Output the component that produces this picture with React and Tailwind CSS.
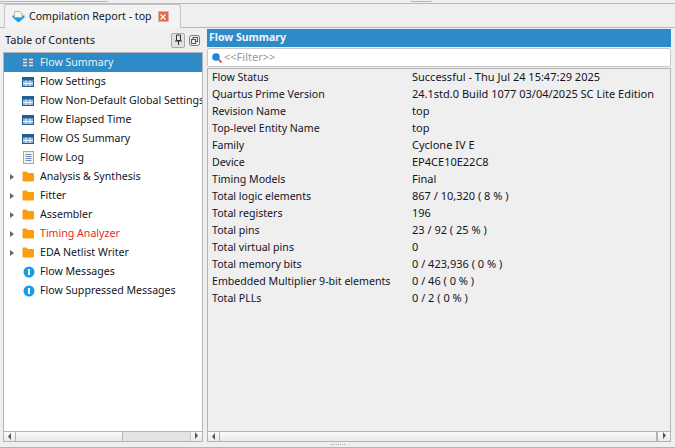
const tree = [
  { label: "Flow Summary", icon: "grid", selected: true },
  { label: "Flow Settings", icon: "table" },
  { label: "Flow Non-Default Global Settings", icon: "table" },
  { label: "Flow Elapsed Time", icon: "table" },
  { label: "Flow OS Summary", icon: "table" },
  { label: "Flow Log", icon: "log" },
  { label: "Analysis & Synthesis", icon: "folder", arrow: true },
  { label: "Fitter", icon: "folder", arrow: true },
  { label: "Assembler", icon: "folder", arrow: true },
  { label: "Timing Analyzer", icon: "folder", arrow: true, red: true },
  { label: "EDA Netlist Writer", icon: "folder", arrow: true },
  { label: "Flow Messages", icon: "info" },
  { label: "Flow Suppressed Messages", icon: "info" },
];

const rows = [
  ["Flow Status", "Successful - Thu Jul 24 15:47:29 2025"],
  ["Quartus Prime Version", "24.1std.0 Build 1077 03/04/2025 SC Lite Edition"],
  ["Revision Name", "top"],
  ["Top-level Entity Name", "top"],
  ["Family", "Cyclone IV E"],
  ["Device", "EP4CE10E22C8"],
  ["Timing Models", "Final"],
  ["Total logic elements", "867 / 10,320 ( 8 % )"],
  ["Total registers", "196"],
  ["Total pins", "23 / 92 ( 25 % )"],
  ["Total virtual pins", "0"],
  ["Total memory bits", "0 / 423,936 ( 0 % )"],
  ["Embedded Multiplier 9-bit elements", "0 / 46 ( 0 % )"],
  ["Total PLLs", "0 / 2 ( 0 % )"],
];

const TreeIcon = ({ type, selected }) => {
  if (type === "folder") {
    return (
      <svg width="12" height="11" viewBox="0 0 12 11">
        <path d="M0.5 1.5 a1 1 0 0 1 1-1 h3 l1.5 1.5 h5 a1 1 0 0 1 1 1 v6.5 a1 1 0 0 1-1 1 h-9.5 a1 1 0 0 1-1-1z" fill="#fb9d0f" />
      </svg>
    );
  }
  if (type === "info") {
    return (
      <svg className="ml-px" width="12" height="12" viewBox="0 0 12 12">
        <circle cx="6" cy="6" r="5.5" fill="#1b9ae8" />
        <rect x="5" y="3" width="2" height="6" fill="#fff" />
      </svg>
    );
  }
  if (type === "log") {
    return (
      <svg className="ml-px" width="11" height="13" viewBox="0 0 11 13">
        <rect x="0.5" y="0.5" width="10" height="12" fill="#f4f1ea" stroke="#b3a794" />
        <path d="M2.5 3.5h6M2.5 5.5h6M2.5 7.5h6M2.5 9.5h6" stroke="#6f8fb5" />
      </svg>
    );
  }
  if (type === "grid") {
    return (
      <svg width="12" height="11" viewBox="0 0 12 11">
        <rect width="12" height="11" fill={selected ? "#4a83ad" : "#2d6da8"} />
        <path d="M1 2.5h4M7 2.5h4M1 5.5h4M7 5.5h4M1 8.5h4M7 8.5h4" stroke="#d8e6f2" strokeWidth="1.4" />
      </svg>
    );
  }
  return (
    <svg width="12" height="10" viewBox="0 0 12 10">
      <rect width="12" height="10" fill="#8db2d4" />
      <rect width="12" height="3.5" fill="#1f5f99" />
      <path d="M0.5 3.5v6.5M11.5 3.5v6.5" stroke="#1f5f99" />
      <path d="M1 6.5h10M4 3.5v6.5M8 3.5v6.5" stroke="#eef4fa" />
      <path d="M0 9.5h12" stroke="#1f5f99" />
    </svg>
  );
};

const ScrollButton = ({ left }) => (
  <div className="flex w-[11px] shrink-0 items-center justify-center">
    <svg width="3" height="7" viewBox="0 0 3 7">
      <path d={left ? "M3 0v7L0 3.5z" : "M0 0v7l3-3.5z"} fill="#555" />
    </svg>
  </div>
);

const ScrollBar = ({ children }) => (
  <div className="flex h-[11px] shrink-0 border-y border-[#b4b4b4] bg-gradient-to-b from-[#fbfbfb] to-[#e9e9e9]">
    {children}
  </div>
);

export default function App() {
  return (
    <div
      className="flex h-[448px] w-[675px] flex-col overflow-hidden bg-[#efefef] text-[10.6px] text-[#14141e]"
      style={{ fontFamily: '"Noto Sans", sans-serif' }}
    >
      <div className="flex h-[3px] shrink-0">
        <div className="h-[2px] w-[108px] rounded-br-[2px] border-b border-[#b4b4b4]" />
        <div className="ml-[302px] h-[2px] w-[22px] rounded-b-[2px] border-b border-[#b4b4b4]" />
      </div>
      <div className="flex h-[25px] shrink-0 items-end border-y border-[#b9b9b9] pl-[4px]">
        <div className="mb-[-1px] flex h-[24px] w-[177px] items-center rounded-t-[3px] border border-b-0 border-[#c4c4c4] bg-[#f3f3f3] pl-[7px]">
          <svg className="mr-[4px] shrink-0" width="13" height="12" viewBox="0 0 13 12">
            <path d="M0.5 4.5h3v-1h6v1h3v2l-6 5-6-5z" fill="#1b9ae8" />
            <path d="M2.5 0.5h5.5l2 2v4h-7.5z" fill="#fbf6e6" stroke="#b8a888" strokeWidth="0.8" />
          </svg>
          <span className="whitespace-nowrap text-[10.6px] leading-none">Compilation Report - top</span>
          <div className="ml-[6px] flex h-[11px] w-[11px] shrink-0 items-center justify-center rounded-[1px] border border-[#d8b0a4] bg-[#e2694a]">
            <svg width="6" height="6" viewBox="0 0 6 6">
              <path d="M0.5 0.5l5 5M5.5 0.5l-5 5" stroke="#fff" strokeWidth="1.2" />
            </svg>
          </div>
        </div>
      </div>

      <div className="flex min-h-0 flex-1 gap-[4px] pl-[3px] pr-[4px]">
        <div className="flex w-[200px] shrink-0 flex-col">
          <div className="flex h-[25px] shrink-0 items-center justify-between border-b border-[#b4b4b4] pl-[2px] pr-[3px]">
            <span className="text-[11px]">Table of Contents</span>
            <div className="flex items-center gap-[4px]">
              <div className="flex h-[15px] w-[14px] items-center justify-center rounded-[2px] border border-[#a8a8a8] bg-[#e2e2e2]">
                <svg width="9" height="12" viewBox="0 0 9 12">
                  <path d="M2.5 1h4v5.5h-4zM1 7h7M4.5 7v4" fill="none" stroke="#333" />
                </svg>
              </div>
              <svg width="11" height="11" viewBox="0 0 11 11">
                <rect x="0.5" y="0.5" width="10" height="10" rx="2" fill="none" stroke="#777" />
                <rect x="4" y="2.5" width="4.5" height="4" fill="none" stroke="#555" />
                <rect x="2.5" y="4.5" width="4" height="4" fill="#efefef" stroke="#555" />
              </svg>
            </div>
          </div>
          <div className="min-h-0 flex-1 overflow-hidden border-x border-[#b4b4b4] bg-white">
            {tree.map((item) => (
              <div
                key={item.label}
                className={`relative flex h-[19px] items-center whitespace-nowrap pl-[18px] ${item.selected ? "bg-[#2e8bc8] text-[#e8f2fa]" : ""} ${item.red ? "text-[#f01c24]" : ""}`}
              >
                {item.arrow && (
                  <svg className="absolute left-[6px] top-[7px]" width="4" height="6" viewBox="0 0 4 6">
                    <path d="M0 0v6l4-3z" fill="#666" />
                  </svg>
                )}
                <div className="flex w-[18px] shrink-0 items-center">
                  <TreeIcon type={item.icon} selected={item.selected} />
                </div>
                <span>{item.label}</span>
              </div>
            ))}
          </div>
          <div className="border-x border-[#b4b4b4]">
            <ScrollBar>
              <ScrollButton left />
              <div className="w-[108px] shrink-0 border-x border-[#b4b4b4]" />
              <div className="flex-1 bg-[#e3e3e3]" />
              <div className="border-l border-[#c8c8c8]">
                <ScrollButton />
              </div>
            </ScrollBar>
          </div>
        </div>

        <div className="flex min-w-0 flex-1 flex-col">
          <div className="mt-px flex h-[18px] shrink-0 items-center bg-[#2e8bc8] pl-[2px] text-[10.5px] font-bold text-[#eef5fb]">
            Flow Summary
          </div>
          <div className="mt-px flex h-[19px] shrink-0 items-center gap-[2px] rounded-[2px] border border-[#c8c8c8] bg-white pl-[4px] text-[11px] text-[#9a9a9a]">
            <svg width="10" height="10" viewBox="0 0 10 10">
              <circle cx="4" cy="4" r="3.8" fill="#1b86e0" />
              <path d="M6.5 6.5l3 3" stroke="#d43a3a" strokeWidth="1.6" />
            </svg>
            &lt;&lt;Filter&gt;&gt;
          </div>
          <div className="mt-px flex min-h-0 flex-1 flex-col border-x border-t border-[#b4b4b4]">
            {rows.map(([name, value]) => (
              <div key={name} className="flex h-[17px] shrink-0 items-center whitespace-nowrap pl-[4px]">
                <span className="w-[200px] shrink-0">{name}</span>
                <span className="text-[11px]">{value}</span>
              </div>
            ))}
          </div>
          <div className="border-x border-[#b4b4b4]">
            <ScrollBar>
              <ScrollButton left />
              <div className="flex-1 border-x border-[#b4b4b4]" />
              <div className="border-l border-[#b4b4b4] pl-px">
                <ScrollButton />
              </div>
            </ScrollBar>
          </div>
        </div>
      </div>

      <div className="flex h-[5px] shrink-0 items-center justify-center">
        <div className="h-px w-[14px] border-t border-dotted border-[#aaa]" />
      </div>
      <div className="h-px shrink-0 bg-[#b4b4b4]" />
    </div>
  );
}
